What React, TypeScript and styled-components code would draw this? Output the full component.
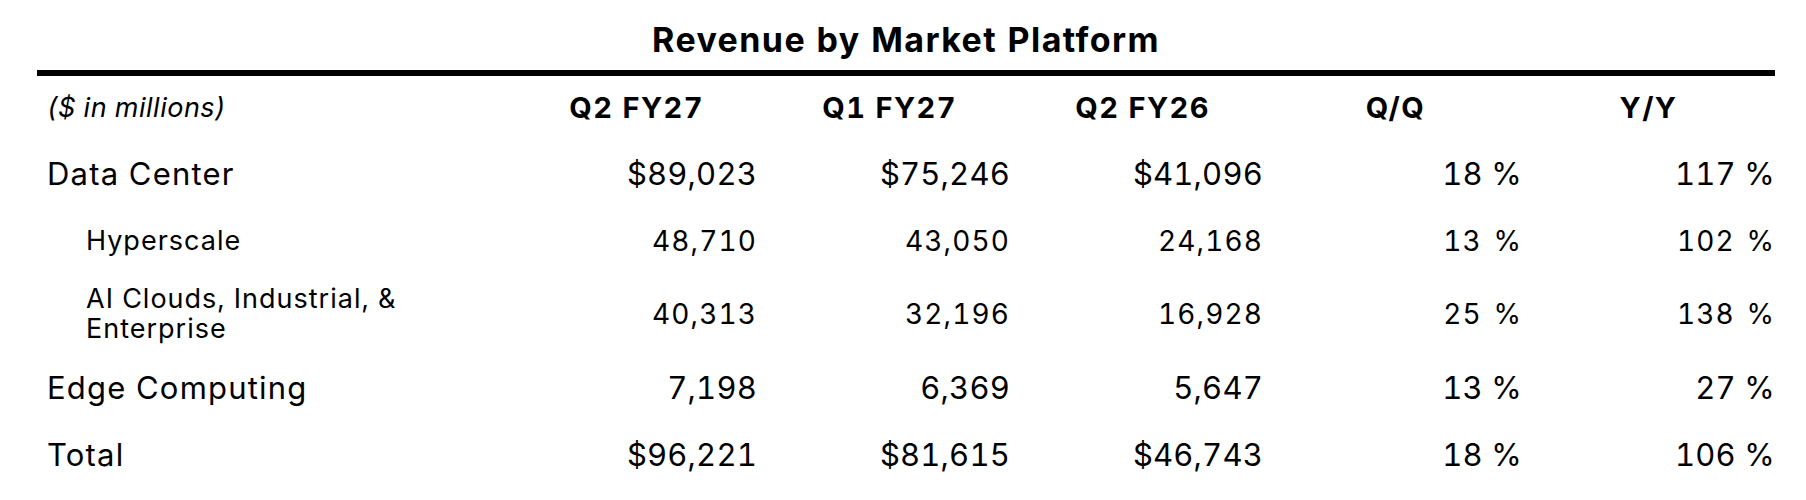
import React from "react";
import styled, { createGlobalStyle } from "styled-components";

const GlobalStyle = createGlobalStyle`
  html, body {
    margin: 0;
    padding: 0;
    background: #ffffff;
  }
  body {
    font-family: Inter, "Noto Sans", "Liberation Sans", sans-serif;
    color: #000000;
    font-variant-numeric: tabular-nums;
  }
`;

const Page = styled.div`
  padding: 0 31px 0 37px;
`;

const Title = styled.div`
  padding-top: 20px;
  margin-bottom: 10px;
  height: 40px;
  line-height: 40px;
  text-align: center;
  font-size: 34px;
  font-weight: 700;
  letter-spacing: 1.4px;
`;

const Rule = styled.div`
  height: 6px;
  background: #000000;
`;

const Row = styled.div<{ $head?: boolean; $sub?: boolean }>`
  display: grid;
  grid-template-columns: 1fr repeat(5, 253px);
  align-items: center;
  min-height: ${(p) => (p.$head ? 64 : 67)}px;
  padding: ${(p) => (p.$head ? 0 : 10)}px 0;
  box-sizing: border-box;
  font-size: ${(p) => (p.$sub ? 27 : 31)}px;
  line-height: ${(p) => (p.$sub ? 30 : 36)}px;
`;

const Caption = styled.div`
  padding-left: 10px;
  font-size: 27px;
  font-style: italic;
  font-weight: 400;
  letter-spacing: 0.5px;
`;

const HeadCell = styled.div`
  text-align: center;
  font-size: 29px;
  font-weight: 700;
  letter-spacing: 1.4px;
`;

const Label = styled.div<{ $indent?: boolean }>`
  padding-left: ${(p) => (p.$indent ? 49 : 10)}px;
  padding-right: 100px;
  letter-spacing: ${(p) => (p.$indent ? 1 : 1.2)}px;
`;

const Value = styled.div<{ $pct?: boolean; $sub?: boolean }>`
  text-align: right;
  padding-right: ${(p) => (p.$pct ? 0 : 6)}px;
  white-space: pre;
  font-size: ${(p) => (p.$sub ? 28 : 31)}px;
  letter-spacing: ${(p) => (p.$sub ? 1.1 : 0.2)}px;
  word-spacing: ${(p) => (p.$pct && p.$sub ? 3 : 0)}px;
`;

type Line = {
  label: string;
  sub?: boolean;
  values: string[];
};

const headers = ["Q2 FY27", "Q1 FY27", "Q2 FY26", "Q/Q", "Y/Y"];

const lines: Line[] = [
  { label: "Data Center", values: ["$89,023", "$75,246", "$41,096", "18 %", "117 %"] },
  { label: "Hyperscale", sub: true, values: ["48,710", "43,050", "24,168", "13 %", "102 %"] },
  {
    label: "AI Clouds, Industrial, & Enterprise",
    sub: true,
    values: ["40,313", "32,196", "16,928", "25 %", "138 %"],
  },
  { label: "Edge Computing", values: ["7,198", "6,369", "5,647", "13 %", "27 %"] },
  { label: "Total", values: ["$96,221", "$81,615", "$46,743", "18 %", "106 %"] },
];

export default function App() {
  return (
    <Page>
      <GlobalStyle />
      <Title>Revenue by Market Platform</Title>
      <Rule />
      <Row $head>
        <Caption>($ in millions)</Caption>
        {headers.map((h) => (
          <HeadCell key={h}>{h}</HeadCell>
        ))}
      </Row>
      {lines.map((line) => (
        <Row key={line.label} $sub={line.sub}>
          <Label $indent={line.sub}>{line.label}</Label>
          {line.values.map((v, i) => (
            <Value key={i} $pct={i >= 3} $sub={line.sub}>
              {v}
            </Value>
          ))}
        </Row>
      ))}
    </Page>
  );
}
